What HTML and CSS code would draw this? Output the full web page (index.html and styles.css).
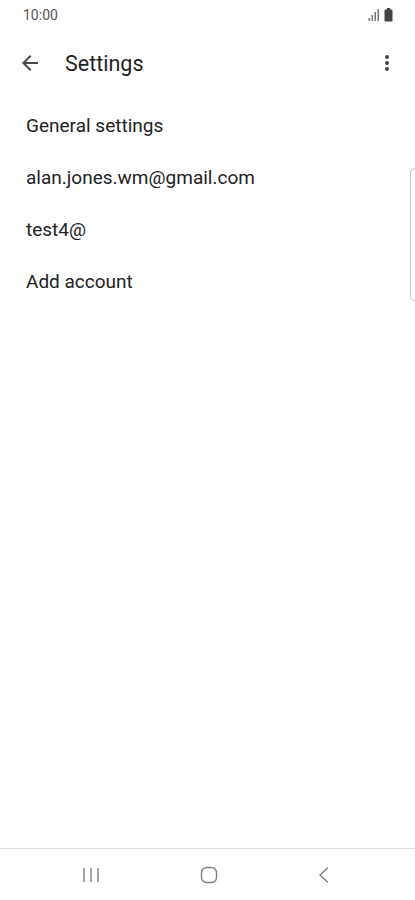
FILE: index.html
```html
<!DOCTYPE html>
<html lang="en">
<head>
<meta charset="UTF-8">
<meta name="viewport" content="width=device-width, initial-scale=1.0">
<title>Settings</title>
<link rel="stylesheet" href="styles.css">
</head>
<body>

<div class="status-bar">
    <span class="clock">10:00</span>
    <div class="status-icons">
        <svg width="12" height="14" viewBox="0 0 12 14">
            <rect x="0.5" y="10" width="1.4" height="3" fill="#6a6a6a"/>
            <rect x="3.5" y="7" width="1.4" height="6" fill="#6a6a6a"/>
            <rect x="6.5" y="4" width="1.4" height="9" fill="#6a6a6a"/>
            <rect x="9.5" y="1" width="1.4" height="12" fill="#6a6a6a"/>
        </svg>
        <svg width="9" height="14" viewBox="0 0 9 14">
            <rect x="2.8" y="0" width="3.4" height="2" rx="0.5" fill="#444"/>
            <rect x="0.5" y="1.5" width="8" height="12" rx="1.2" fill="#444"/>
        </svg>
    </div>
</div>

<div class="app-bar">
    <svg class="back" width="24" height="24" viewBox="0 0 24 24">
        <path d="M20 11H7.83l5.59-5.59L12 4l-8 8 8 8 1.41-1.41L7.83 13H20v-2z" fill="#474747"/>
    </svg>
    <h1 class="title">Settings</h1>
    <svg class="more" width="24" height="24" viewBox="0 0 24 24">
        <path d="M12 8c1.1 0 2-.9 2-2s-.9-2-2-2-2 .9-2 2 .9 2 2 2zm0 2c-1.1 0-2 .9-2 2s.9 2 2 2 2-.9 2-2-.9-2-2-2zm0 6c-1.1 0-2 .9-2 2s.9 2 2 2 2-.9 2-2-.9-2-2-2z" fill="#474747"/>
    </svg>
</div>

<ul class="settings-list">
    <li>General settings</li>
    <li>alan.jones.wm@gmail.com</li>
    <li>test4@</li>
    <li>Add account</li>
</ul>

<div class="edge-handle"></div>

<div class="nav-bar">
    <svg width="20" height="20" viewBox="0 0 20 20">
        <path d="M3 3v14M10 3v14M17 3v14" stroke="#808080" stroke-width="1.4" fill="none"/>
    </svg>
    <svg width="20" height="20" viewBox="0 0 20 20">
        <rect x="2.5" y="2.5" width="15" height="15" rx="5" stroke="#808080" stroke-width="1.4" fill="none"/>
    </svg>
    <svg width="20" height="20" viewBox="0 0 20 20">
        <path d="M12 2.5L4 10l8 7.5" stroke="#808080" stroke-width="1.4" fill="none"/>
    </svg>
</div>

</body>
</html>
```

FILE: styles.css
```css
body {
    margin: 0;
    padding: 0;
    height: 100vh;
    display: flex;
    flex-direction: column;
    background-color: #ffffff;
    font-family: Roboto, "Noto Sans", sans-serif;
    color: #1f1f1f;
    overflow: hidden;
}
.status-bar {
    height: 30px;
    display: flex;
    align-items: center;
    justify-content: space-between;
    padding: 0 23px;
}
.clock {
    font-size: 14px;
    color: #555555;
}
.status-icons {
    display: flex;
    align-items: center;
    gap: 4px;
    margin-right: -1px;
}
.app-bar {
    height: 66px;
    display: flex;
    align-items: center;
    padding: 0 16px 0 18px;
}
.title {
    flex: 1;
    margin: 0 0 0 23px;
    font-size: 21.5px;
    font-weight: normal;
    color: #1f1f1f;
}
.settings-list {
    flex: 1;
    list-style: none;
    margin: 0;
    padding: 3px 0 0 0;
}
.settings-list li {
    height: 52px;
    display: flex;
    align-items: center;
    padding-left: 26px;
    font-size: 19px;
    color: #222222;
}
.edge-handle {
    position: absolute;
    top: 168px;
    right: 0;
    width: 4px;
    height: 131px;
    border: 1px solid #c8c8c8;
    border-right: none;
    border-radius: 5px 0 0 5px;
}
.nav-bar {
    height: 51px;
    border-top: 1px solid #e2e2e2;
    display: flex;
    align-items: center;
    justify-content: space-between;
    padding: 0 79px 0 81px;
}
```
